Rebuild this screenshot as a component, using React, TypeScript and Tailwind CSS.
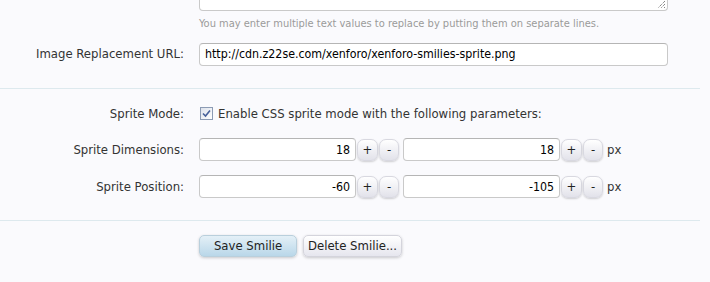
import React from "react";

const font = "font-['DejaVu_Sans_Condensed','DejaVu_Sans','Liberation_Sans',sans-serif]";

const inputCls =
  "h-[23px] rounded-[4px] border border-[#c9c9c9] border-t-[#b5b5b5] bg-white px-[5px] text-[12.3px] text-black outline-none";

const StepButton: React.FC<{ label: string; w: string }> = ({ label, w }) => (
  <button
    className={`${w} h-[22px] rounded-[7px] border border-[#d8d8e0] bg-gradient-to-b from-white to-[#e2e2ea] text-[13px] leading-none text-[#222] shadow-[0_1px_2px_rgba(0,0,0,0.18)]`}
  >
    {label}
  </button>
);

const Spinner: React.FC<{ value: string }> = ({ value }) => (
  <div className="flex items-center">
    <input readOnly value={value} className={`${inputCls} w-[157px] text-right`} />
    <div className="ml-[1px] flex gap-[1px]">
      <StepButton label="+" w="w-[21px]" />
      <StepButton label="-" w="w-[20px]" />
    </div>
  </div>
);

const Row: React.FC<{ label: string; children: React.ReactNode; className?: string }> = ({
  label,
  children,
  className = "",
}) => (
  <div className={`grid grid-cols-[184px_1fr] items-center gap-x-[15px] ${className}`}>
    <div className="text-right text-[13px] text-[#333]">{label}</div>
    <div>{children}</div>
  </div>
);

const App: React.FC = () => {
  return (
    <div className={`${font} h-[282px] w-[710px] overflow-hidden bg-[#fafafd]`}>
      <div className="mr-[10px]">
        {/* url / text replacement section */}
        <div className="border-b border-[#dde9ee] pb-[22px]">
          <div className="grid grid-cols-[184px_1fr] gap-x-[15px]">
            <div />
            <div className="w-[469px]">
              <div className="relative h-[11px] rounded-b-[4px] border-x border-b border-[#c9c9c9] bg-white">
                <svg
                  className="absolute bottom-[1px] right-[1px]"
                  width="9"
                  height="9"
                  viewBox="0 0 9 9"
                >
                  <path d="M8 1 L1 8 M8 4 L4 8 M8 7 L7 8" stroke="#555" strokeWidth="1" strokeDasharray="1 1" />
                </svg>
              </div>
              <p className="mt-[6px] text-[11px] leading-[14px] text-[#9a9a9a]">
                You may enter multiple text values to replace by putting them on separate lines.
              </p>
            </div>
          </div>
          <Row label="Image Replacement URL:" className="mt-[10px]">
            <input
              readOnly
              value="http://cdn.z22se.com/xenforo/xenforo-smilies-sprite.png"
              className={`${inputCls} w-[469px]`}
            />
          </Row>
        </div>

        {/* sprite section */}
        <div className="border-b border-[#dde9ee] pb-[22px] pt-[15px]">
          <Row label="Sprite Mode:">
            <label className="flex items-center gap-[5px] text-[13px] text-[#333]">
              <span className="ml-[1px] flex h-[13px] w-[13px] items-center justify-center border border-[#8c9bb4] bg-gradient-to-br from-[#dde2ec] to-white">
                <svg width="9" height="9" viewBox="0 0 9 9">
                  <path d="M1 4.5 L3.5 7 L8 1.5" fill="none" stroke="#46609a" strokeWidth="1.6" />
                </svg>
              </span>
              Enable CSS sprite mode with the following parameters:
            </label>
          </Row>
          <Row label="Sprite Dimensions:" className="mt-[15px]">
            <div className="flex items-center text-[13px] text-[#333]">
              <Spinner value="18" />
              <div className="ml-[4px]">
                <Spinner value="18" />
              </div>
              <span className="ml-[4px]">px</span>
            </div>
          </Row>
          <Row label="Sprite Position:" className="mt-[14px]">
            <div className="flex items-center text-[13px] text-[#333]">
              <Spinner value="-60" />
              <div className="ml-[4px]">
                <Spinner value="-105" />
              </div>
              <span className="ml-[4px]">px</span>
            </div>
          </Row>
        </div>

        {/* submit buttons */}
        <div className="grid grid-cols-[184px_1fr] gap-x-[15px] pt-[14px]">
          <div />
          <div className="flex gap-[6px]">
            <button className="h-[22px] w-[98px] rounded-[5px] border border-[#b9cfdc] bg-gradient-to-b from-[#e4f0f7] to-[#b9d7e9] text-[13px] text-[#222] shadow-[0_1px_3px_rgba(0,0,0,0.2)]">
              Save Smilie
            </button>
            <button className="h-[22px] w-[99px] rounded-[5px] border border-[#d4d4dc] bg-gradient-to-b from-white to-[#e6e6ee] text-[13px] text-[#222] shadow-[0_1px_3px_rgba(0,0,0,0.2)]">
              Delete Smilie...
            </button>
          </div>
        </div>
      </div>
    </div>
  );
};

export default App;
